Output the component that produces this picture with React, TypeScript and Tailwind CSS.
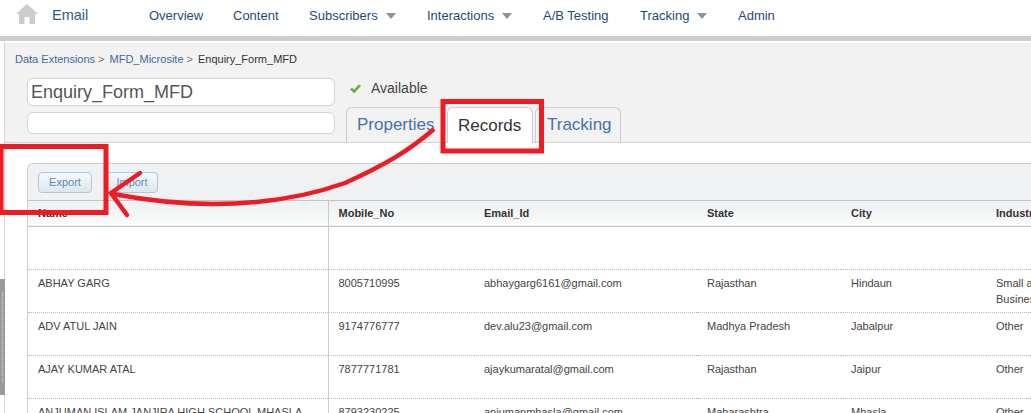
const font = { fontFamily: '"Liberation Sans", Arial, sans-serif' };

const navItems = [
  { label: 'Overview', width: 'w-[84px]' },
  { label: 'Content', width: 'w-[76px]' },
  { label: 'Subscribers', width: 'w-[118px]', caret: true },
  { label: 'Interactions', width: 'w-[116px]', caret: true },
  { label: 'A/B Testing', width: 'w-[97px]' },
  { label: 'Tracking', width: 'w-[98px]', caret: true },
  { label: 'Admin', width: 'w-[60px]' },
];

const rows = [
  { name: '', mobile: '', email: '', state: '', city: '', industry: '' },
  {
    name: 'ABHAY GARG',
    mobile: '8005710995',
    email: 'abhaygarg6161@gmail.com',
    state: 'Rajasthan',
    city: 'Hindaun',
    industry: 'Small and Medium Business',
  },
  {
    name: 'ADV ATUL JAIN',
    mobile: '9174776777',
    email: 'dev.alu23@gmail.com',
    state: 'Madhya Pradesh',
    city: 'Jabalpur',
    industry: 'Other',
  },
  {
    name: 'AJAY KUMAR ATAL',
    mobile: '7877771781',
    email: 'ajaykumaratal@gmail.com',
    state: 'Rajasthan',
    city: 'Jaipur',
    industry: 'Other',
  },
  {
    name: 'ANJUMAN ISLAM JANJIRA HIGH SCHOOL MHASLA',
    mobile: '8793230225',
    email: 'anjumanmhasla@gmail.com',
    state: 'Maharashtra',
    city: 'Mhasla',
    industry: 'Other',
  },
];

function Caret() {
  return <span className="ml-[8px] h-0 w-0 border-x-[5px] border-t-[6px] border-x-transparent border-t-[#8a939b]" />;
}

function Header() {
  return (
    <div className="flex h-[36px] items-center bg-white pb-[5px]">
      <svg viewBox="0 0 22 20" className="ml-[16px] -mt-[3px] h-[20px] w-[22px]" fill="#cccccc">
        <path d="M11 0 L22 10 L19 10 L19 20 L13.5 20 L13.5 13 L8.5 13 L8.5 20 L3 20 L3 10 L0 10 Z" />
      </svg>
      <span className="ml-[14px] w-[97px] text-[14.5px] text-[#34597a]">Email</span>
      {navItems.map((item) => (
        <span key={item.label} className={`flex items-center text-[13px] text-[#1f4a73] ${item.width}`}>
          {item.label}
          {item.caret && <Caret />}
        </span>
      ))}
    </div>
  );
}

function Tabs() {
  return (
    <div className="mt-[9px] flex items-end">
      <div className="mr-[3px] flex h-[35px] w-[98px] items-center rounded-t-[6px] border border-b-0 border-[#cccccc] pl-[10px] text-[17px] text-[#4472a8]">
        Properties
      </div>
      <div className="mr-[2px] -mb-px flex h-[36px] w-[86px] items-center rounded-t-[6px] border border-b-0 border-[#cccccc] bg-white pl-[10px] text-[17px] text-[#333333]">
        Records
      </div>
      <div className="flex h-[35px] w-[86px] items-center rounded-t-[6px] border border-b-0 border-[#cccccc] pl-[11px] text-[17px] text-[#4472a8]">
        Tracking
      </div>
    </div>
  );
}

function TitleArea() {
  return (
    <div className="h-[100px] border-b border-[#d4d4d4] bg-[#f2f2f2] pl-[10px]">
      <div className="flex h-[32px] items-center text-[11px] text-[#777777]">
        <span className="text-[#3f6a9b]">Data Extensions</span>
        <span className="ml-[3px]">&gt;</span>
        <span className="ml-[5px] text-[#3f6a9b]">MFD_Microsite</span>
        <span className="ml-[3px]">&gt;</span>
        <span className="ml-[5px] text-[#333333]">Enquiry_Form_MFD</span>
      </div>
      <div className="ml-[12px] mt-[3px] flex">
        <div className="flex w-[308px] flex-col gap-[6px]">
          <div className="flex h-[28px] items-center rounded-[6px] border border-[#d4d4d4] bg-white pl-[3px] text-[18px] text-[#555555]">
            Enquiry_Form_MFD
          </div>
          <div className="h-[22px] rounded-[6px] border border-[#d4d4d4] bg-white" />
        </div>
        <div className="ml-[11px] flex flex-col">
          <div className="flex h-[20px] items-center pl-[4px] text-[14px] text-[#444444]">
            <svg viewBox="0 0 12 10" className="mr-[10px] h-[9px] w-[11px]" fill="none" stroke="#6db33f" strokeWidth="3">
              <path d="M1 5 L4.5 8.3 L11 1.2" />
            </svg>
            Available
          </div>
          <Tabs />
        </div>
      </div>
    </div>
  );
}

function Table() {
  return (
    <div className="ml-[22px] mt-[20px] w-[1100px] rounded-tl-[6px] border-l border-t border-[#cccccc]">
      <div className="flex h-[37px] items-center rounded-tl-[6px] border-b border-[#c4c4c4] bg-[#f0f1f3] pl-[10px]">
        <span className="flex h-[21px] w-[54px] items-center justify-center rounded-[4px] border border-[#b4c6d8] bg-gradient-to-b from-[#f6f9fb] to-[#dde6ee] text-[11px] text-[#5f86ad]">
          Export
        </span>
        <span className="ml-[14px] flex h-[21px] w-[52px] items-center justify-center rounded-[4px] border border-[#b4c6d8] bg-gradient-to-b from-[#f6f9fb] to-[#dde6ee] text-[11px] text-[#5f8fc0]">
          Import
        </span>
      </div>
      <table className="w-full table-fixed border-collapse text-[11px]">
        <colgroup>
          <col className="w-[300px]" />
          <col className="w-[146px]" />
          <col className="w-[223px]" />
          <col className="w-[144px]" />
          <col className="w-[145px]" />
          <col />
        </colgroup>
        <thead>
          <tr className="h-[25px] border-b border-[#c4c4c4] bg-gradient-to-b from-[#eef0f2] to-[#fafbfb] text-left font-bold text-[#333333]">
            <th className="border-r border-[#cccccc] pl-[10px]">Name</th>
            <th className="pl-[10px]">Mobile_No</th>
            <th className="pl-[10px]">Email_Id</th>
            <th className="pl-[10px]">State</th>
            <th className="pl-[10px]">City</th>
            <th className="pl-[10px]">Industry</th>
          </tr>
        </thead>
        <tbody>
          {rows.map((row) => (
            <tr key={row.mobile || 'blank'} className="h-[43px] border-b border-dotted border-[#bbbbbb] align-top text-[#444444]">
              <td className="border-r border-[#cccccc] pl-[10px] pt-[5px] leading-[16px]">{row.name}</td>
              <td className="pl-[10px] pt-[5px] leading-[16px]">{row.mobile}</td>
              <td className="pl-[10px] pt-[5px] leading-[16px]">{row.email}</td>
              <td className="pl-[10px] pt-[5px] leading-[16px]">{row.state}</td>
              <td className="pl-[10px] pt-[5px] leading-[16px]">{row.city}</td>
              <td className="pl-[10px] pt-[5px] leading-[16px]">{row.industry}</td>
            </tr>
          ))}
        </tbody>
      </table>
    </div>
  );
}

function Annotations() {
  return (
    <svg className="pointer-events-none absolute left-0 top-0" width="1031" height="413" fill="none" stroke="#ed1c24">
      <rect x="443" y="101.5" width="98.5" height="49.5" strokeWidth="5" />
      <rect x="1" y="146.5" width="105" height="66" strokeWidth="5" />
      <path
        d="M434 129 C410 150 385 165 345 183 C300 199 250 204 213 204 C175 204 140 199 113 194"
        strokeWidth="4.5"
      />
      <path d="M140 173 L111 193 L127 215" strokeWidth="4.5" strokeLinecap="round" />
    </svg>
  );
}

export default function App() {
  return (
    <div className="relative h-[413px] w-[1031px] overflow-hidden bg-white" style={font}>
      <Header />
      <div className="h-[5px] bg-[#cccccc]" />
      <div className="relative ml-[4px] mt-[2px] h-[370px] overflow-hidden border-l border-[#d4d4d4]">
        <TitleArea />
        <Table />
      </div>
      <div className="absolute left-0 top-[279px] flex h-[116px] w-[5px] items-center justify-center bg-[#9a9a9a]">
        <span className="h-[90px] border-l border-dotted border-[#d8d8d8]" />
      </div>
      <Annotations />
    </div>
  );
}
